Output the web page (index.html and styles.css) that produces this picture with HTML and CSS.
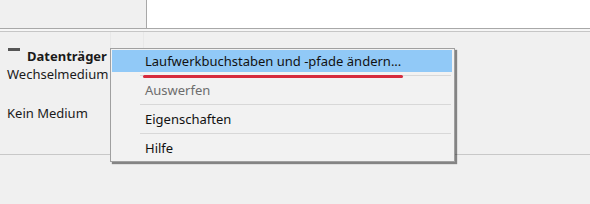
FILE: index.html
```html
<!DOCTYPE html>
<html lang="de">
<head>
<meta charset="utf-8"/>
<title>Datenträgerverwaltung</title>
<link rel="stylesheet" href="styles.css">
</head>
<body>
<div class="top">
  <div class="top-left"></div>
  <div class="top-right"></div>
</div>
<div class="rule"></div>
<div class="disk">
  <div class="disk-label">
    <div class="disk-title"><span class="collapse"></span>Datenträger</div>
    <div>Wechselmedium</div>
    <div class="disk-state">Kein Medium</div>
  </div>
  <div class="disk-gap"></div>
  <div class="disk-area"></div>
</div>

<div class="menu">
  <div class="item active">Laufwerkbuchstaben und -pfade ändern...</div>
  <div class="sep"></div>
  <div class="item disabled">Auswerfen</div>
  <div class="sep"></div>
  <div class="item">Eigenschaften</div>
  <div class="sep"></div>
  <div class="item">Hilfe</div>
</div>
<div class="mark"></div>
</body>
</html>
```

FILE: styles.css
```css
body {
  font-family: 'Noto Sans', 'Open Sans', sans-serif;
  font-size: 13px;
  color: #1a1a1a;
  background: #f0f0f0;
  margin: 0;
  height: 204px;
  overflow: hidden;
}
.top {
  display: flex;
  height: 29px;
}
.top-left {
  width: 146px;
  border-bottom: 1px solid #a8a8a8;
}
.top-right {
  flex: 1;
  background: white;
  border-left: 1px solid #a8a8a8;
  border-bottom: 1px solid #a8a8a8;
}
.rule {
  height: 2px;
  background: #f6f6f6;
  border-bottom: 1px solid #c6c6c6;
}
.disk {
  display: flex;
  height: 122px;
  border-bottom: 1px solid #c8c8c8;
}
.disk-label {
  width: 103px;
  padding: 15px 0 0 7px;
  border-right: 1px solid #e8e8e8;
  line-height: 18px;
}
.disk-title {
  font-weight: bold;
  position: relative;
  padding-left: 20px;
}
.collapse {
  position: absolute;
  left: 1px;
  top: 1px;
  width: 12px;
  height: 3px;
  background: #555;
}
.disk-state {
  margin-top: 21px;
}
.disk-gap {
  width: 32px;
  border-right: 1px solid #e8e8e8;
}
.disk-area {
  flex: 1;
}
.menu {
  position: absolute;
  left: 110px;
  top: 48px;
  width: 340px;
  padding: 1px 2px 2px 1px;
  background: #f2f2f2;
  border: 1px solid #a0a0a0;
  box-shadow: 2px 2px 1px rgba(0, 0, 0, 0.45);
}
.item {
  height: 22px;
  line-height: 22px;
  padding-left: 33px;
  color: #111;
}
.item.active {
  background: #91c9f7;
}
.item.disabled {
  color: #6d6d6d;
}
.sep {
  height: 3px;
  margin: 3px 1px 0 28px;
  border-top: 1px solid #d8d8d8;
}
.mark {
  position: absolute;
  left: 143px;
  top: 75px;
  width: 260px;
  height: 3px;
  border-radius: 2px;
  background: #d62b3d;
}
```
